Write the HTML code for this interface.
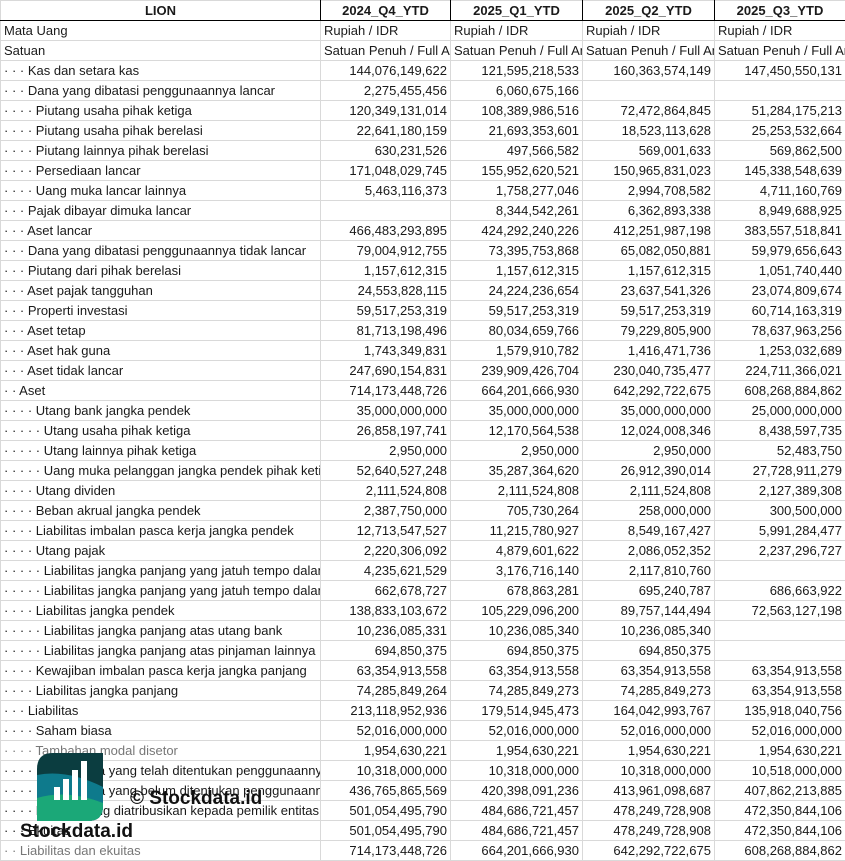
<!DOCTYPE html>
<html><head><meta charset="utf-8"><style>
body{margin:0;background:#fff;width:845px;height:861px;overflow:hidden;position:relative;font-family:"Liberation Sans",Arial,sans-serif;font-size:13px;color:#1a1a1a}
table{border-collapse:collapse;table-layout:fixed;position:absolute;left:0;top:0;width:845px}
td{height:19px;padding:0 3px;border:1px solid #d9d9d9;white-space:nowrap;overflow:hidden;line-height:19px;text-overflow:clip}
td.n{text-align:right}
tr.h td{font-weight:bold;text-align:center;border-bottom:1px solid #000;border-left:1px solid #000;border-right:1px solid #000}
tr.h td:first-child{border-left:1px solid #d9d9d9}
.g{color:#777}
</style></head><body>
<table>
<colgroup><col style="width:320px"><col style="width:130px"><col style="width:132px"><col style="width:132px"><col style="width:131px"></colgroup>
<tr class="h"><td>LION</td><td>2024_Q4_YTD</td><td>2025_Q1_YTD</td><td>2025_Q2_YTD</td><td>2025_Q3_YTD</td></tr>
<tr><td>Mata Uang</td><td>Rupiah / IDR</td><td>Rupiah / IDR</td><td>Rupiah / IDR</td><td>Rupiah / IDR</td></tr>
<tr><td>Satuan</td><td>Satuan Penuh / Full Amount</td><td>Satuan Penuh / Full Amount</td><td>Satuan Penuh / Full Amount</td><td>Satuan Penuh / Full Amount</td></tr>
<tr><td>· · · Kas dan setara kas</td><td class="n">144,076,149,622</td><td class="n">121,595,218,533</td><td class="n">160,363,574,149</td><td class="n">147,450,550,131</td></tr>
<tr><td>· · · Dana yang dibatasi penggunaannya lancar</td><td class="n">2,275,455,456</td><td class="n">6,060,675,166</td><td class="n"></td><td class="n"></td></tr>
<tr><td>· · · · Piutang usaha pihak ketiga</td><td class="n">120,349,131,014</td><td class="n">108,389,986,516</td><td class="n">72,472,864,845</td><td class="n">51,284,175,213</td></tr>
<tr><td>· · · · Piutang usaha pihak berelasi</td><td class="n">22,641,180,159</td><td class="n">21,693,353,601</td><td class="n">18,523,113,628</td><td class="n">25,253,532,664</td></tr>
<tr><td>· · · · Piutang lainnya pihak berelasi</td><td class="n">630,231,526</td><td class="n">497,566,582</td><td class="n">569,001,633</td><td class="n">569,862,500</td></tr>
<tr><td>· · · · Persediaan lancar</td><td class="n">171,048,029,745</td><td class="n">155,952,620,521</td><td class="n">150,965,831,023</td><td class="n">145,338,548,639</td></tr>
<tr><td>· · · · Uang muka lancar lainnya</td><td class="n">5,463,116,373</td><td class="n">1,758,277,046</td><td class="n">2,994,708,582</td><td class="n">4,711,160,769</td></tr>
<tr><td>· · · Pajak dibayar dimuka lancar</td><td class="n"></td><td class="n">8,344,542,261</td><td class="n">6,362,893,338</td><td class="n">8,949,688,925</td></tr>
<tr><td>· · · Aset lancar</td><td class="n">466,483,293,895</td><td class="n">424,292,240,226</td><td class="n">412,251,987,198</td><td class="n">383,557,518,841</td></tr>
<tr><td>· · · Dana yang dibatasi penggunaannya tidak lancar</td><td class="n">79,004,912,755</td><td class="n">73,395,753,868</td><td class="n">65,082,050,881</td><td class="n">59,979,656,643</td></tr>
<tr><td>· · · Piutang dari pihak berelasi</td><td class="n">1,157,612,315</td><td class="n">1,157,612,315</td><td class="n">1,157,612,315</td><td class="n">1,051,740,440</td></tr>
<tr><td>· · · Aset pajak tangguhan</td><td class="n">24,553,828,115</td><td class="n">24,224,236,654</td><td class="n">23,637,541,326</td><td class="n">23,074,809,674</td></tr>
<tr><td>· · · Properti investasi</td><td class="n">59,517,253,319</td><td class="n">59,517,253,319</td><td class="n">59,517,253,319</td><td class="n">60,714,163,319</td></tr>
<tr><td>· · · Aset tetap</td><td class="n">81,713,198,496</td><td class="n">80,034,659,766</td><td class="n">79,229,805,900</td><td class="n">78,637,963,256</td></tr>
<tr><td>· · · Aset hak guna</td><td class="n">1,743,349,831</td><td class="n">1,579,910,782</td><td class="n">1,416,471,736</td><td class="n">1,253,032,689</td></tr>
<tr><td>· · · Aset tidak lancar</td><td class="n">247,690,154,831</td><td class="n">239,909,426,704</td><td class="n">230,040,735,477</td><td class="n">224,711,366,021</td></tr>
<tr><td>· · Aset</td><td class="n">714,173,448,726</td><td class="n">664,201,666,930</td><td class="n">642,292,722,675</td><td class="n">608,268,884,862</td></tr>
<tr><td>· · · · Utang bank jangka pendek</td><td class="n">35,000,000,000</td><td class="n">35,000,000,000</td><td class="n">35,000,000,000</td><td class="n">25,000,000,000</td></tr>
<tr><td>· · · · · Utang usaha pihak ketiga</td><td class="n">26,858,197,741</td><td class="n">12,170,564,538</td><td class="n">12,024,008,346</td><td class="n">8,438,597,735</td></tr>
<tr><td>· · · · · Utang lainnya pihak ketiga</td><td class="n">2,950,000</td><td class="n">2,950,000</td><td class="n">2,950,000</td><td class="n">52,483,750</td></tr>
<tr><td>· · · · · Uang muka pelanggan jangka pendek pihak ketiga</td><td class="n">52,640,527,248</td><td class="n">35,287,364,620</td><td class="n">26,912,390,014</td><td class="n">27,728,911,279</td></tr>
<tr><td>· · · · Utang dividen</td><td class="n">2,111,524,808</td><td class="n">2,111,524,808</td><td class="n">2,111,524,808</td><td class="n">2,127,389,308</td></tr>
<tr><td>· · · · Beban akrual jangka pendek</td><td class="n">2,387,750,000</td><td class="n">705,730,264</td><td class="n">258,000,000</td><td class="n">300,500,000</td></tr>
<tr><td>· · · · Liabilitas imbalan pasca kerja jangka pendek</td><td class="n">12,713,547,527</td><td class="n">11,215,780,927</td><td class="n">8,549,167,427</td><td class="n">5,991,284,477</td></tr>
<tr><td>· · · · Utang pajak</td><td class="n">2,220,306,092</td><td class="n">4,879,601,622</td><td class="n">2,086,052,352</td><td class="n">2,237,296,727</td></tr>
<tr><td>· · · · · Liabilitas jangka panjang yang jatuh tempo dalam</td><td class="n">4,235,621,529</td><td class="n">3,176,716,140</td><td class="n">2,117,810,760</td><td class="n"></td></tr>
<tr><td>· · · · · Liabilitas jangka panjang yang jatuh tempo dalam</td><td class="n">662,678,727</td><td class="n">678,863,281</td><td class="n">695,240,787</td><td class="n">686,663,922</td></tr>
<tr><td>· · · · Liabilitas jangka pendek</td><td class="n">138,833,103,672</td><td class="n">105,229,096,200</td><td class="n">89,757,144,494</td><td class="n">72,563,127,198</td></tr>
<tr><td>· · · · · Liabilitas jangka panjang atas utang bank</td><td class="n">10,236,085,331</td><td class="n">10,236,085,340</td><td class="n">10,236,085,340</td><td class="n"></td></tr>
<tr><td>· · · · · Liabilitas jangka panjang atas pinjaman lainnya</td><td class="n">694,850,375</td><td class="n">694,850,375</td><td class="n">694,850,375</td><td class="n"></td></tr>
<tr><td>· · · · Kewajiban imbalan pasca kerja jangka panjang</td><td class="n">63,354,913,558</td><td class="n">63,354,913,558</td><td class="n">63,354,913,558</td><td class="n">63,354,913,558</td></tr>
<tr><td>· · · · Liabilitas jangka panjang</td><td class="n">74,285,849,264</td><td class="n">74,285,849,273</td><td class="n">74,285,849,273</td><td class="n">63,354,913,558</td></tr>
<tr><td>· · · Liabilitas</td><td class="n">213,118,952,936</td><td class="n">179,514,945,473</td><td class="n">164,042,993,767</td><td class="n">135,918,040,756</td></tr>
<tr><td>· · · · Saham biasa</td><td class="n">52,016,000,000</td><td class="n">52,016,000,000</td><td class="n">52,016,000,000</td><td class="n">52,016,000,000</td></tr>
<tr><td class="g">· · · · Tambahan modal disetor</td><td class="n">1,954,630,221</td><td class="n">1,954,630,221</td><td class="n">1,954,630,221</td><td class="n">1,954,630,221</td></tr>
<tr><td>· · · · · Saldo laba yang telah ditentukan penggunaannya</td><td class="n">10,318,000,000</td><td class="n">10,318,000,000</td><td class="n">10,318,000,000</td><td class="n">10,518,000,000</td></tr>
<tr><td>· · · · · Saldo laba yang belum ditentukan penggunaannya</td><td class="n">436,765,865,569</td><td class="n">420,398,091,236</td><td class="n">413,961,098,687</td><td class="n">407,862,213,885</td></tr>
<tr><td>· · · · Ekuitas yang diatribusikan kepada pemilik entitas</td><td class="n">501,054,495,790</td><td class="n">484,686,721,457</td><td class="n">478,249,728,908</td><td class="n">472,350,844,106</td></tr>
<tr><td>· · · Ekuitas</td><td class="n">501,054,495,790</td><td class="n">484,686,721,457</td><td class="n">478,249,728,908</td><td class="n">472,350,844,106</td></tr>
<tr><td class="g">· · Liabilitas dan ekuitas</td><td class="n">714,173,448,726</td><td class="n">664,201,666,930</td><td class="n">642,292,722,675</td><td class="n">608,268,884,862</td></tr>
</table>
<svg style="position:absolute;left:37px;top:753px" width="66" height="68" viewBox="0 0 66 68">
<defs><clipPath id="c"><path d="M16 0H66V53Q66 68 51 68H0V16Q0 0 16 0Z"/></clipPath></defs>
<g clip-path="url(#c)">
<rect width="66" height="68" fill="#0b3d40"/>
<path d="M0 22Q30 16 66 34V68H0Z" fill="#0e7a8c"/>
<path d="M0 45Q30 36 66 50V68H0Z" fill="#1ba878"/>
</g>
<rect x="17" y="34" width="6" height="13" fill="#fff"/>
<rect x="26" y="26" width="6" height="21" fill="#fff"/>
<rect x="35" y="17" width="6" height="30" fill="#fff"/>
<rect x="44" y="8" width="6" height="39" fill="#fff"/>
</svg>
<div style="position:absolute;left:130px;top:788px;font-size:19px;font-weight:bold;color:#111">© Stockdata.id</div>
<div style="position:absolute;left:20px;top:821px;font-size:19px;font-weight:bold;color:#111">Stockdata.id</div>
</body></html>
